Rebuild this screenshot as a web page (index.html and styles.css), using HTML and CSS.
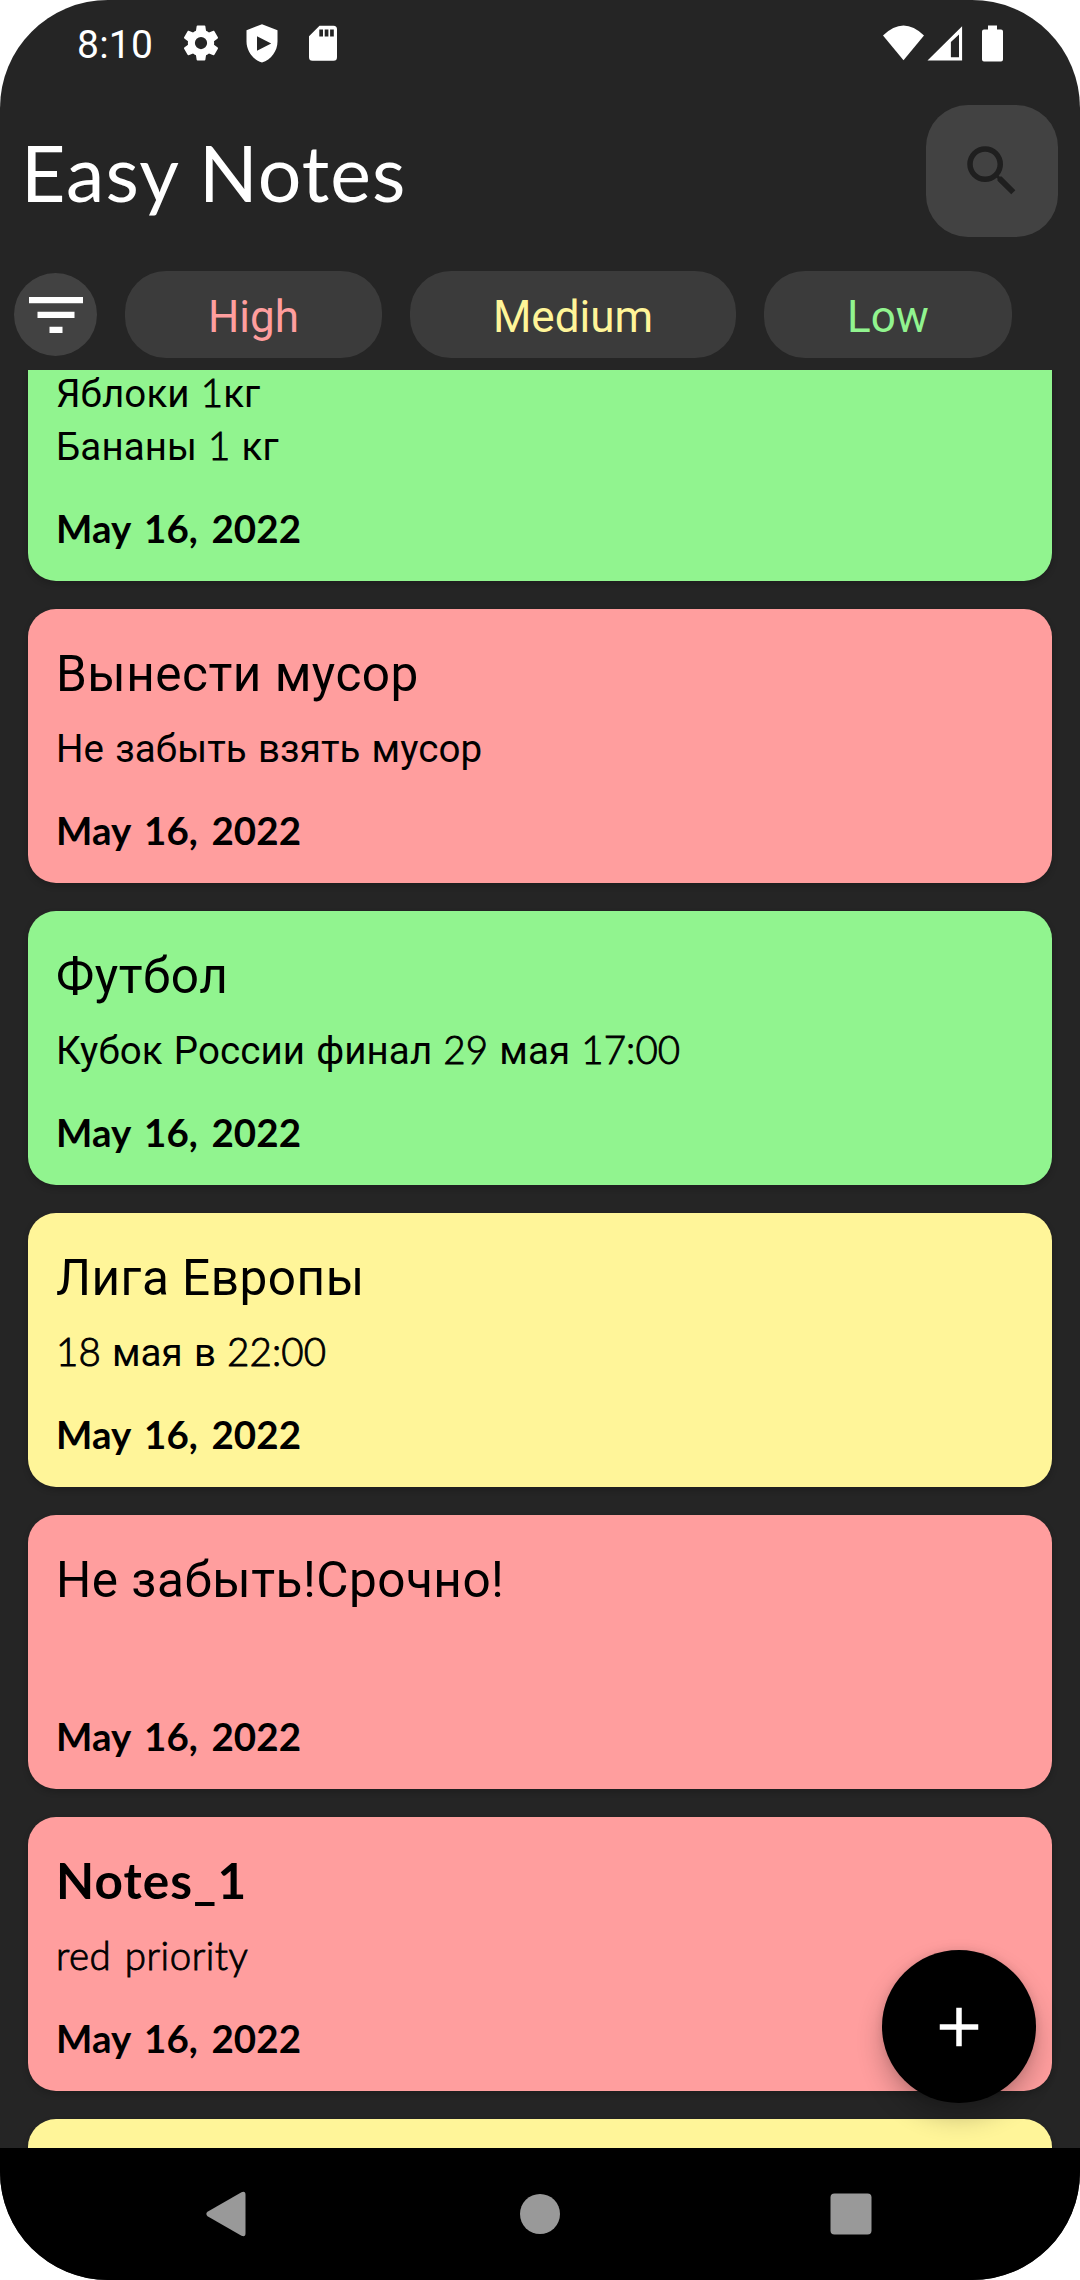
FILE: index.html
```html
<!DOCTYPE html>
<html lang="ru">
<head>
<meta charset="utf-8">
<title>Easy Notes</title>
<link rel="stylesheet" href="styles.css">
</head>
<body>
<div class="screen">
  <div class="status">
    <span class="status__time">8:10</span>
    <div class="status__left">
      <svg width="42" height="42" viewBox="0 0 24 24"><path fill="#fff" d="M19.43 12.98c.04-.32.07-.64.07-.98s-.03-.66-.07-.98l2.11-1.65c.19-.15.24-.42.12-.64l-2-3.46c-.12-.22-.39-.3-.61-.22l-2.49 1c-.52-.4-1.08-.73-1.69-.98l-.38-2.65A.49.49 0 0 0 14 2h-4c-.25 0-.46.18-.49.42l-.38 2.65c-.61.25-1.17.59-1.69.98l-2.49-1c-.23-.09-.49 0-.61.22l-2 3.46c-.13.22-.07.49.12.64l2.11 1.65c-.04.32-.07.65-.07.98s.03.66.07.98l-2.11 1.65c-.19.15-.24.42-.12.64l2 3.46c.12.22.39.3.61.22l2.49-1c.52.4 1.08.73 1.69.98l.38 2.65c.03.24.24.42.49.42h4c.25 0 .46-.18.49-.42l.38-2.65c.61-.25 1.17-.59 1.69-.98l2.49 1c.23.09.49 0 .61-.22l2-3.46c.12-.22.07-.49-.12-.64l-2.11-1.65zM12 15.5a3.5 3.5 0 1 1 0-7 3.5 3.5 0 0 1 0 7z"/></svg>
      <svg width="42" height="42" viewBox="0 0 42 42"><path fill="#fff" fill-rule="evenodd" d="M21 2.200 36.500 8.300V19.500C36.500 29 30 37.700 21 40.600 12 37.700 5.500 29 5.500 19.500V8.300zM16 14.300V28.700L30.200 21.500z"/></svg>
      <svg width="42" height="42" viewBox="0 0 42 42"><path fill="#fff" fill-rule="evenodd" d="M31.500 3.700H17.500L7 14.200V35.200A3.500 3.500 0 0 0 10.500 38.700H31.500A3.500 3.500 0 0 0 35 35.200V7.200A3.500 3.500 0 0 0 31.500 3.700zM17.300 7.500H21V14.500H17.300zM22.700 7.500H26.400V14.500H22.700zM28.100 7.500H31.800V14.500H28.100z"/></svg>
    </div>
    <svg class="status__right" width="124" height="42" viewBox="0 0 124 42">
      <path fill="#fff" d="M2 13.500Q22.500-6.500 43 13.500L22.500 38.300z"/>
      <path fill="#fff" fill-rule="evenodd" d="M81.100 4.300V38.600H46.500zM78 12.500 69.900 20V35.300H78z"/>
      <path fill="#fff" d="M107 3.500h9v4h4a2 2 0 0 1 2 2v28a2 2 0 0 1-2 2h-17a2 2 0 0 1-2-2V9.500a2 2 0 0 1 2-2h4z"/>
    </svg>
  </div>

  <header class="header">
    <h1 class="header__title">Easy Notes</h1>
    <button class="search" aria-label="Search">
      <svg width="66" height="66" viewBox="0 0 24 24"><path fill="#1f1f1f" d="M15.500 14h-.79l-.28-.27A6.470 6.470 0 0 0 16 9.500 6.500 6.500 0 1 0 9.500 16c1.610 0 3.090-.59 4.230-1.570l.27.28v.79l5 4.990L20.490 19l-4.990-5zm-6 0C7.010 14 5 11.990 5 9.500S7.010 5 9.500 5 14 7.010 14 9.500 11.990 14 9.500 14z"/></svg>
    </button>
  </header>

  <div class="filters">
    <button class="filters__all" aria-label="All">
      <svg width="54" height="36" viewBox="0 0 54 36"><path fill="#fff" d="M0 0H54V6.300H0zM8.500 14.700H45.500V21H8.500zM20.500 29.700H33.500V36H20.500z"/></svg>
    </button>
    <button class="chip chip--high">High</button>
    <button class="chip chip--medium">Medium</button>
    <button class="chip chip--low">Low</button>
  </div>

  <main class="list">
    <article class="note note--green note--scrolled">
      <p class="note__text">Яблоки <span class="latin">1</span>кг<br>Бананы <span class="latin">1</span> кг</p>
      <p class="note__date"><b>May 16, 2022</b></p>
    </article>
    <article class="note note--red">
      <h2 class="note__title">Вынести мусор</h2>
      <p class="note__text">Не забыть взять мусор</p>
      <p class="note__date"><b>May 16, 2022</b></p>
    </article>
    <article class="note note--green">
      <h2 class="note__title">Футбол</h2>
      <p class="note__text">Кубок России финал <span class="latin">29</span> мая <span class="latin">17:00</span></p>
      <p class="note__date"><b>May 16, 2022</b></p>
    </article>
    <article class="note note--yellow">
      <h2 class="note__title">Лига Европы</h2>
      <p class="note__text"><span class="latin">18</span> мая в <span class="latin">22:00</span></p>
      <p class="note__date"><b>May 16, 2022</b></p>
    </article>
    <article class="note note--red">
      <h2 class="note__title">Не забыть!Срочно!</h2>
      <p class="note__text"></p>
      <p class="note__date"><b>May 16, 2022</b></p>
    </article>
    <article class="note note--red">
      <h2 class="note__title"><b>Notes_1</b></h2>
      <p class="note__text"><span class="latin latin--words">red priority</span></p>
      <p class="note__date"><b>May 16, 2022</b></p>
    </article>
    <article class="note note--yellow"></article>
  </main>

  <nav class="nav">
    <svg width="42" height="46" viewBox="0 0 42 46"><path fill="#999" d="M2.500 20.800 36.500 1.300Q40.500-.4 40.500 4V42Q40.500 46.400 36.500 44.700L2.500 25.200Q.2 23 2.500 20.800z"/></svg>
    <svg width="42" height="42" viewBox="0 0 42 42"><circle cx="22" cy="21" r="20" fill="#999"/></svg>
    <svg width="42" height="42" viewBox="0 0 42 42"><rect x=".5" y=".5" width="41" height="41" rx="4" fill="#999"/></svg>
  </nav>

  <button class="fab" aria-label="Add note">
    <svg width="66" height="66" viewBox="0 0 24 24"><path fill="#fff" d="M19 13h-6v6h-2v-6H5v-2h6V5h2v6h6z"/></svg>
  </button>
</div>
</body>
</html>
```
FILE: styles.css
```css
* { box-sizing: border-box; }

body {
  margin: 0;
  background: #fff;
  font-family: Roboto, "Noto Sans", sans-serif;
}

h1, h2, p { margin: 0; font-weight: 400; }

button { border: 0; padding: 0; font: inherit; }

svg { display: block; flex: none; }

.screen {
  position: relative;
  display: flex;
  flex-direction: column;
  width: 1080px;
  height: 2280px;
  overflow: hidden;
  border-radius: 108px;
  background: #252525;
}

/* system status bar */
.status {
  display: flex;
  align-items: flex-start;
  height: 105px;
  padding: 22px 75px 0 77px;
  color: #fff;
}

.status__time {
  width: 103px;
  font-size: 39px;
  line-height: 46px;
  letter-spacing: 0.24px;
}

.status__left { display: flex; gap: 19px; }

.status__right { margin-left: auto; }

/* app bar */
.header {
  display: flex;
  justify-content: space-between;
  height: 132px;
  padding: 0 22px 0 21px;
}

.header__title {
  color: #fff;
  font-family: Lato, sans-serif;
  font-size: 77px;
  line-height: 135px;
  letter-spacing: 1.1px;
}

.search {
  display: flex;
  align-items: center;
  justify-content: center;
  width: 132px;
  height: 132px;
  border-radius: 42px;
  background: #424242;
}

/* priority filters */
.filters {
  display: flex;
  align-items: center;
  gap: 28px;
  height: 133px;
  padding: 22px 14px 0;
}

.filters__all {
  display: flex;
  align-items: center;
  justify-content: center;
  width: 83px;
  height: 83px;
  border-radius: 50%;
  background: #424242;
}

.chip {
  width: 257px;
  height: 87px;
  padding-top: 5px;
  border-radius: 41px;
  background: #3b3b3b;
  font-size: 44px;
  line-height: 82px;
}

.chip--high { color: #ff9e9e; }
.chip--medium { width: 326px; color: #fff599; }
.chip--low { width: 248px; color: #91f48f; }

/* notes */
.list {
  display: flex;
  flex: 1;
  flex-direction: column;
  gap: 28px;
  min-height: 0;
  overflow: hidden;
  padding: 0 28px;
}

.note {
  flex: none;
  height: 274px;
  padding: 31px 28px 25px;
  border-radius: 28px;
  box-shadow: 0 3px 6px rgba(0, 0, 0, 0.2);
  color: #000;
}

.note--green { background: #91f48f; }
.note--red { background: #ff9e9e; }
.note--yellow { background: #fff599; }

.note--scrolled {
  height: 214px;
  margin-top: -3px;
  padding-top: 0;
  border-radius: 0 0 28px 28px;
}

.note__title {
  height: 68px;
  margin-bottom: 14px;
  font-size: 49.5px;
  line-height: 68px;
  letter-spacing: 0.5px;
}

.note__title b {
  font-family: Lato, sans-serif;
  line-height: 1;
  letter-spacing: 1.1px;
}

.note__text {
  min-height: 53px;
  font-size: 38.5px;
  line-height: 53px;
  letter-spacing: 0.1px;
  word-spacing: 1.4px;
}

.note__date {
  margin-top: 31px;
  font-size: 38.5px;
  line-height: 52px;
}

.note__date b {
  font-family: Lato, sans-serif;
  line-height: 1;
  letter-spacing: 0.1px;
  word-spacing: 4px;
}

.latin {
  font-family: Lato, sans-serif;
  font-weight: 300;
  line-height: 1;
  letter-spacing: 0.1px;
  -webkit-text-stroke: 0.9px currentColor;
}

.latin--words { letter-spacing: 0.5px; word-spacing: 2.5px; }

/* system navigation */
.nav {
  display: flex;
  align-items: center;
  justify-content: space-between;
  height: 132px;
  padding: 0 208px 0 205px;
  background: #000;
}

.fab {
  position: absolute;
  right: 44px;
  bottom: 177px;
  display: flex;
  align-items: center;
  justify-content: center;
  width: 154px;
  height: 153px;
  border-radius: 50%;
  background: #000;
  box-shadow: 0 14px 26px rgba(0, 0, 0, 0.24), 0 0 8px rgba(0, 0, 0, 0.1);
}
```
